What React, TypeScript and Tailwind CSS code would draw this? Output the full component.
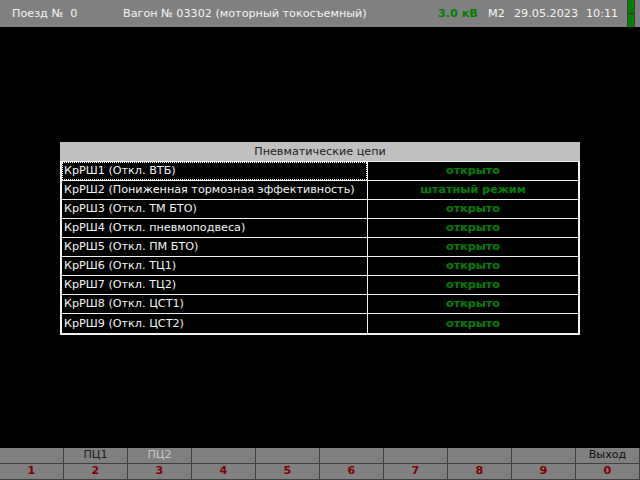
const rows: { name: string; state: string }[] = [
  { name: 'КрРШ1 (Откл. ВТБ)', state: 'открыто' },
  { name: 'КрРШ2 (Пониженная тормозная эффективность)', state: 'штатный режим' },
  { name: 'КрРШ3 (Откл. ТМ БТО)', state: 'открыто' },
  { name: 'КрРШ4 (Откл. пневмоподвеса)', state: 'открыто' },
  { name: 'КрРШ5 (Откл. ПМ БТО)', state: 'открыто' },
  { name: 'КрРШ6 (Откл. ТЦ1)', state: 'открыто' },
  { name: 'КрРШ7 (Откл. ТЦ2)', state: 'открыто' },
  { name: 'КрРШ8 (Откл. ЦСТ1)', state: 'открыто' },
  { name: 'КрРШ9 (Откл. ЦСТ2)', state: 'открыто' },
];

const keys: { label: string; color: string }[] = [
  { label: '', color: '' },
  { label: 'ПЦ1', color: 'text-[#202020]' },
  { label: 'ПЦ2', color: 'text-[#c8c8c8]' },
  { label: '', color: '' },
  { label: '', color: '' },
  { label: '', color: '' },
  { label: '', color: '' },
  { label: '', color: '' },
  { label: '', color: '' },
  { label: 'Выход', color: 'text-[#101010]' },
];

export default function App() {
  return (
    <div className="w-[640px] h-[480px] bg-black flex flex-col overflow-hidden font-['DejaVu_Sans',sans-serif] text-[11.2px]">
      {/* Top status bar */}
      <div className="h-[27px] bg-[#808080] flex items-center pt-[1px] text-[#f4f4f4] whitespace-pre">
        <span className="pl-[12px] w-[123px]">Поезд №  0</span>
        <span className="flex-1">Вагон № 03302 (моторный токосъемный)</span>
        <span className="w-[50px] font-bold text-[#008000]">3.0 кВ</span>
        <span className="w-[26px]">М2</span>
        <span className="w-[72px]">29.05.2023</span>
        <span className="w-[41px]">10:11</span>
        <div className="self-stretch -mt-[1px] w-[8px] flex flex-col border-x border-[#404040]">
          <div className="flex-1 bg-[#008000] border-b border-[#303030]" />
          <div className="flex-1 bg-[#008000]" />
        </div>
        <div className="w-[5px]" />
      </div>

      {/* Pneumatic circuits table */}
      <div className="flex-1 pt-[115px] px-[60px]">
        <div className="h-[19px] bg-[#c0c0c0] flex items-center justify-center pt-[1px] text-[#202020]">
          Пневматические цепи
        </div>
        <div className="border-t border-x-2 border-b-2 border-[#f0f0f0]">
          {rows.map((r, i) => (
            <div
              key={r.name}
              className={`h-[19px] flex ${i < rows.length - 1 ? 'border-b border-[#f0f0f0]' : ''}`}
            >
              <div className="w-[306px] border-r border-[#f0f0f0] flex">
                <div
                  className={`flex-1 flex items-center pl-[1px] pt-[1px] text-[#f4f4f4] border ${
                    i === 0 ? 'border-dotted border-white' : 'border-transparent'
                  }`}
                >
                  {r.name}
                </div>
              </div>
              <div className="flex-1 flex items-center justify-center pt-[1px] font-bold text-[#008000]">
                {r.state}
              </div>
            </div>
          ))}
        </div>
      </div>

      {/* Function keys */}
      <div className="grid grid-cols-10 bg-[#808080]">
        {keys.map((k, i) => (
          <div
            key={'l' + i}
            className={`h-[16px] border-r border-b border-[#404040] flex items-center justify-center ${k.color}`}
          >
            {k.label}
          </div>
        ))}
        {keys.map((_, i) => (
          <div
            key={'n' + i}
            className="h-[16px] border-r border-b border-[#404040] flex items-center justify-center font-bold text-[#800000]"
          >
            {(i + 1) % 10}
          </div>
        ))}
      </div>
    </div>
  );
}
